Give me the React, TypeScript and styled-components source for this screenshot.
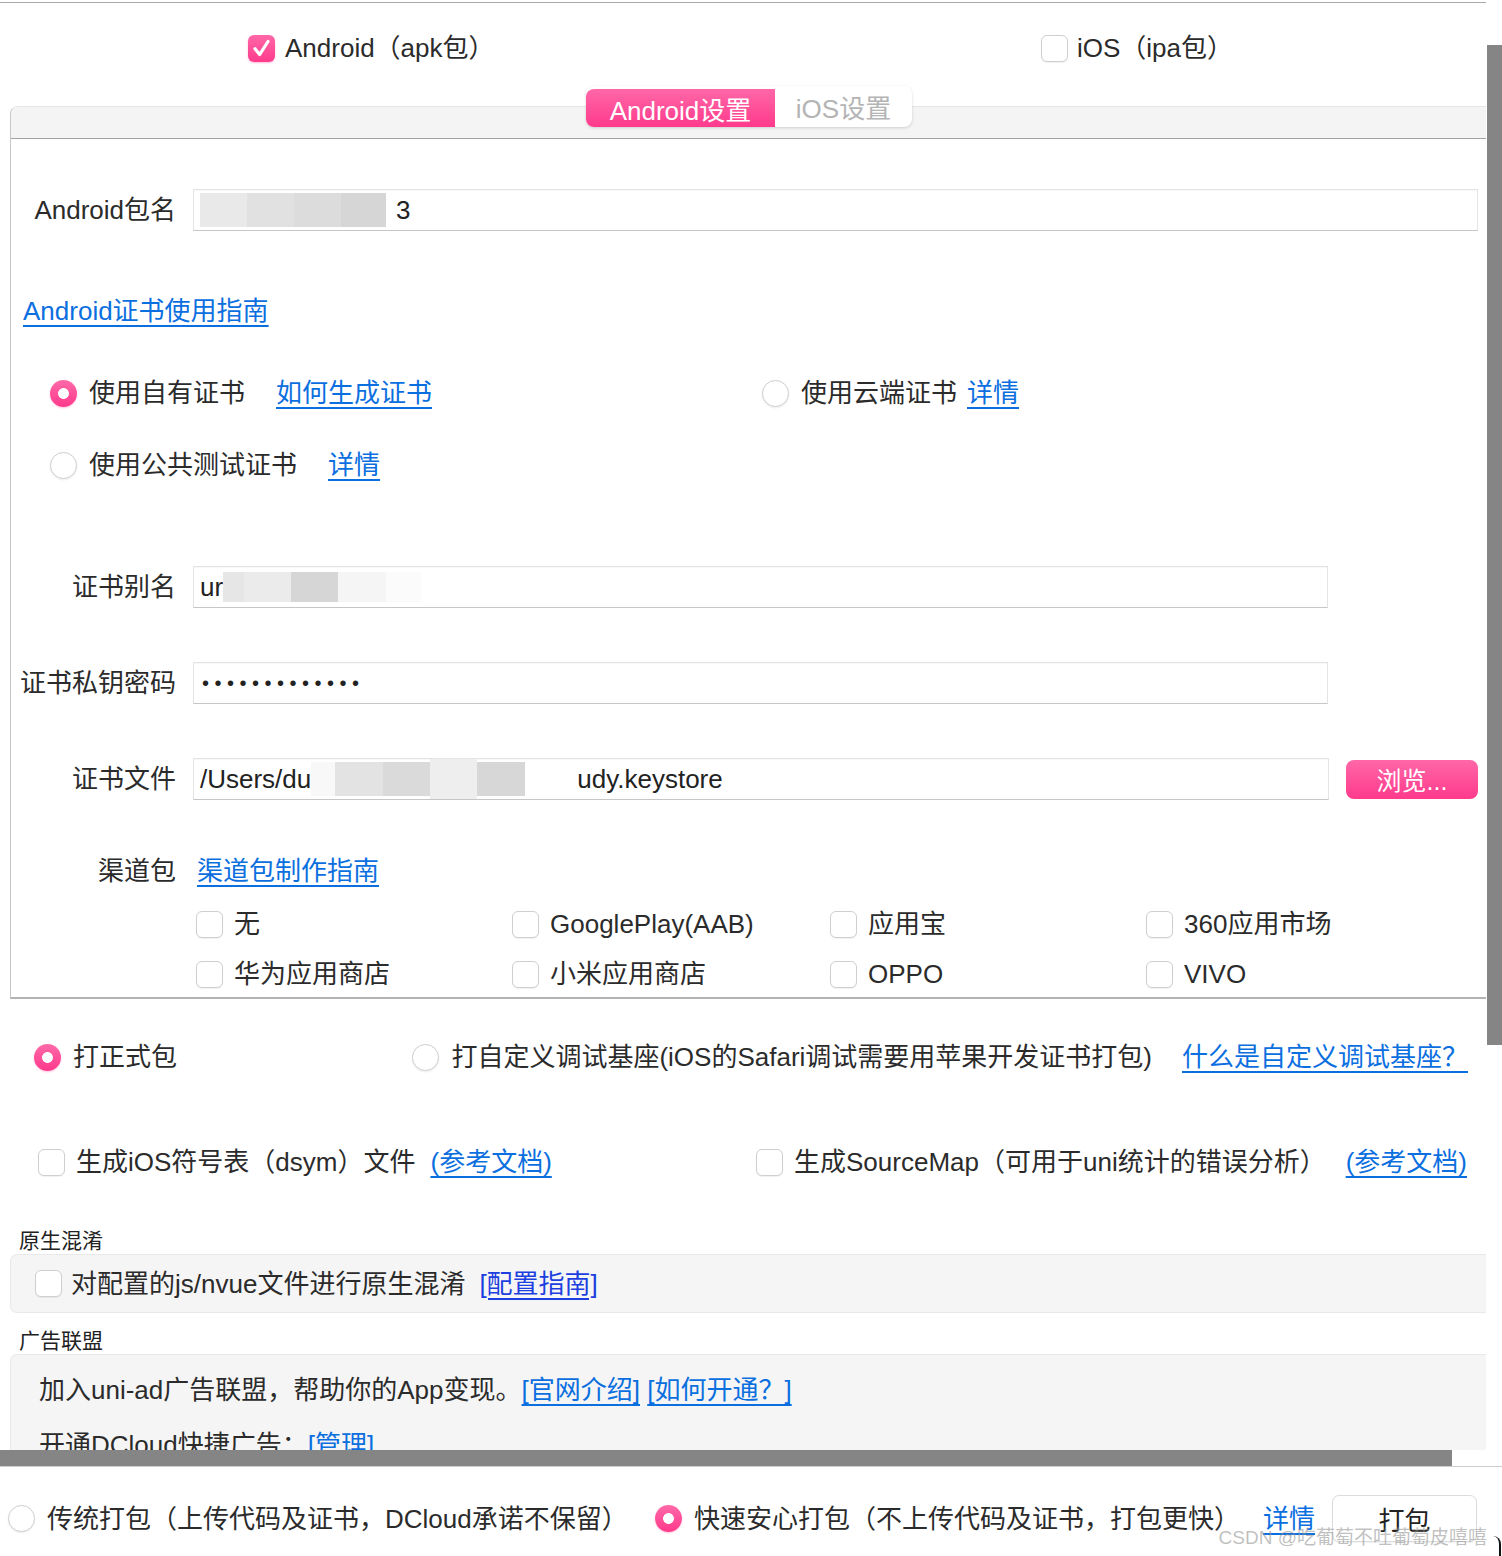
import React from 'react';
import styled, { createGlobalStyle, css } from 'styled-components';

const pinkFill = css`
  background: linear-gradient(180deg, #ff67a8 0%, #ff3a8c 100%);
`;

const GlobalStyle = createGlobalStyle`
  body {
    margin: 0;
    background: #fff;
    color: #2b2b2b;
    font-family: "Liberation Sans", "Noto Sans CJK SC", sans-serif;
  }
`;

const S = {
  screen: styled.div`
    position: relative;
    width: 1502px;
    height: 1556px;
    overflow: hidden;
    display: flex;
    flex-direction: column;
  `,
  upper: styled.div`
    display: flex;
    height: 1450px;
    flex: none;
  `,
  viewport: styled.div`
    width: 1486px;
    flex: none;
    overflow: hidden;
    margin-top: 2px;
    border-top: 1px solid #a9a9a9;
    display: flex;
    flex-direction: column;

    & > * {
      flex-shrink: 0;
    }
  `,
  vTrack: styled.div`
    flex: 1;
    display: flex;
    flex-direction: column;
  `,
  vThumb: styled.div`
    margin: 45px 0 0 1px;
    height: 1000px;
    background: #858585;
  `,
  hBar: styled.div`
    height: 16px;
    flex: none;
    display: flex;
  `,
  hThumb: styled.div`
    width: 1452px;
    background: #858585;
  `,
  bottom: styled.div`
    flex: 1;
    border-top: 1px solid #cdcdcd;
    display: flex;
    align-items: center;
    padding: 14px 25px 0 8px;
  `,
  bottomGroup: styled.div<{ $w?: number }>`
    display: flex;
    align-items: center;
    ${({ $w }) => ($w ? `width: ${$w}px; flex: none;` : '')}
  `,
  spacer: styled.div`
    flex: 1;
  `,
  packButton: styled.button`
    width: 145px;
    height: 47px;
    margin-left: 17px;
    background: #fff;
    border: 1px solid #dcdcdc;
    border-radius: 7px;
    box-shadow: 0 1px 1px rgba(0, 0, 0, 0.05);
    font-family: inherit;
    font-size: 26px;
    color: #222;
  `,
  watermark: styled.div`
    position: absolute;
    right: 15px;
    bottom: 7px;
    font-size: 19px;
    color: rgba(150, 150, 150, 0.6);
    white-space: nowrap;
    pointer-events: none;
  `,
  corner: styled.div`
    position: absolute;
    right: 1px;
    bottom: 0;
    width: 6px;
    height: 20px;
    border-right: 2px solid #111;
    border-top-right-radius: 12px;
  `,

  platformRow: styled.div`
    height: 83px;
    box-sizing: border-box;
    padding: 7px 0 0 248px;
    display: grid;
    grid-template-columns: 793px 1fr;
    align-items: center;
  `,
  tabs: styled.div`
    position: relative;
    z-index: 1;
    align-self: flex-start;
    margin-left: 586px;
    height: 41px;
    display: flex;
    background: #fff;
    border-radius: 8px;
    box-shadow: 0 1px 3px rgba(0, 0, 0, 0.16);
  `,
  tab: styled.div<{ $active?: boolean }>`
    display: flex;
    align-items: center;
    justify-content: center;
    font-size: 26px;
    ${({ $active }) =>
      $active
        ? css`
            width: 189px;
            margin-top: 3px;
            border-radius: 8px 0 0 8px;
            color: #fff;
            ${pinkFill}
          `
        : css`
            width: 137px;
            color: #b4b4b4;
          `}
  `,
  panel: styled.div`
    margin: -21px 0 0 10px;
    border-top: 1px solid #e6e6e6;
    border-left: 1px solid #c6c6c6;
    border-bottom: 2px solid #b3b3b3;
    border-top-left-radius: 8px;
    overflow: hidden;
  `,
  panelHead: styled.div`
    height: 31px;
    background: #f4f4f4;
    border-bottom: 1px solid #a3a3a3;
  `,
  panelBody: styled.div`
    display: flex;
    flex-direction: column;
    padding: 50px 8px 5px 0;
  `,
  field: styled.div<{ $mt: number; $mr?: number }>`
    display: flex;
    align-items: center;
    gap: 17px;
    margin-top: ${({ $mt }) => $mt}px;
    margin-right: ${({ $mr }) => $mr ?? 0}px;
  `,
  label: styled.div`
    width: 165px;
    flex: none;
    text-align: right;
    font-size: 26px;
    line-height: 36px;
    white-space: nowrap;
  `,
  input: styled.div`
    flex: 1;
    height: 42px;
    box-sizing: border-box;
    border: 1px solid #e4e4e4;
    border-bottom-color: #c6c6c6;
    background: #fff;
    box-shadow: inset 0 1px 1px rgba(0, 0, 0, 0.03);
    display: flex;
    align-items: center;
    padding-left: 6px;
    font-size: 26px;
    color: #222;
    white-space: nowrap;
    overflow: hidden;
  `,
  smudge: styled.span<{ $w: number; $c: string; $h?: number }>`
    flex: none;
    display: inline-block;
    width: ${({ $w }) => $w}px;
    height: ${({ $h }) => $h ?? 34}px;
    background: ${({ $c }) => $c};
  `,
  dots: styled.span`
    font-size: 20px;
    letter-spacing: 5.5px;
    padding-left: 2px;
  `,
  browse: styled.button`
    width: 132px;
    height: 39px;
    flex: none;
    border: none;
    border-radius: 8px;
    color: #fff;
    font-family: inherit;
    font-size: 25px;
    ${pinkFill}
  `,
  guide: styled.div`
    margin-top: 62px;
    padding-left: 12px;
    line-height: 36px;
  `,
  radioGrid: styled.div`
    margin-top: 42px;
    padding-left: 39px;
    display: grid;
    grid-template-columns: 712px 1fr;
    grid-auto-rows: 36px;
    row-gap: 36px;
  `,
  channelHead: styled.div`
    margin-top: 53px;
    display: flex;
    align-items: center;
    gap: 21px;
  `,
  channelGrid: styled.div`
    margin: 17px 0 0 185px;
    display: grid;
    grid-template-columns: 316px 318px 316px 1fr;
    grid-auto-rows: 36px;
    row-gap: 14px;
  `,
  spread: styled.div<{ $mt: number; $pl: number; $pr: number }>`
    margin-top: ${({ $mt }) => $mt}px;
    padding: 0 ${({ $pr }) => $pr}px 0 ${({ $pl }) => $pl}px;
    height: 36px;
    display: flex;
    align-items: center;
    justify-content: space-between;
  `,
  inline: styled.div<{ $gap: number }>`
    display: flex;
    align-items: center;
    gap: ${({ $gap }) => $gap}px;
  `,
  sectionTitle: styled.div<{ $mt: number }>`
    margin-top: ${({ $mt }) => $mt}px;
    padding-left: 19px;
    font-size: 21px;
    line-height: 26px;
    color: #222;
  `,
  grayBox: styled.div`
    margin-left: 10px;
    background: #f5f5f5;
    border: 1px solid #e8e8e8;
    border-right: none;
    border-radius: 7px 0 0 7px;
  `,
  obfBox: styled.div`
    height: 57px;
    display: flex;
    align-items: center;
    gap: 14px;
    padding-left: 24px;
  `,
  adBox: styled.div`
    display: flex;
    flex-direction: column;
    gap: 19px;
    padding: 17px 28px 30px;
    font-size: 26px;
    line-height: 36px;
    white-space: nowrap;
  `,
};

const Option = styled.label<{ $gap?: number }>`
  display: inline-flex;
  align-items: center;
  gap: ${({ $gap }) => $gap ?? 12}px;
  font-size: 26px;
  line-height: 36px;
  white-space: nowrap;
`;

const Link = styled.a<{ $deep?: boolean }>`
  color: ${({ $deep }) => ($deep ? '#1d3fe0' : '#0b6fe0')};
  text-decoration: underline;
  text-underline-offset: 5px;
  text-decoration-thickness: 1.5px;
  font-size: 26px;
  line-height: 36px;
  white-space: nowrap;
  cursor: pointer;
`;

const CheckBox = styled.span<{ $on?: boolean }>`
  flex: none;
  width: 27px;
  height: 27px;
  box-sizing: border-box;
  border-radius: 6px;
  display: inline-flex;
  align-items: center;
  justify-content: center;
  ${({ $on }) =>
    $on
      ? css`
          ${pinkFill}
          box-shadow: 0 1px 2px rgba(255, 60, 140, 0.35);
        `
      : css`
          background: #fff;
          border: 1px solid #cfcfcf;
          box-shadow: 0 1px 1px rgba(0, 0, 0, 0.06);
        `}
`;

const RadioDot = styled.span<{ $on?: boolean }>`
  flex: none;
  width: 27px;
  height: 27px;
  box-sizing: border-box;
  border-radius: 50%;
  ${({ $on }) =>
    $on
      ? css`
          background: radial-gradient(circle at center, #fff 0 5px, transparent 5.8px),
            linear-gradient(180deg, #ff6aa9 0%, #ff388b 100%);
          box-shadow: 0 1px 2px rgba(255, 60, 140, 0.3);
        `
      : css`
          background: #fff;
          border: 1px solid #cfcfcf;
          box-shadow: 0 1px 2px rgba(0, 0, 0, 0.08);
        `}
`;

const Check: React.FC<{ on?: boolean }> = ({ on }) => (
  <CheckBox $on={on}>
    {on && (
      <svg width="27" height="27" viewBox="0 0 27 27">
        <path
          d="M7 13.8 L11.6 19.6 L20 6.5"
          fill="none"
          stroke="#fff"
          strokeWidth="3.2"
          strokeLinecap="round"
          strokeLinejoin="round"
        />
      </svg>
    )}
  </CheckBox>
);

const CheckOption: React.FC<{ text: string; on?: boolean; gap?: number }> = ({ text, on, gap }) => (
  <Option $gap={gap ?? 11}>
    <Check on={on} />
    <span>{text}</span>
  </Option>
);

const RadioOption: React.FC<{ text: string; on?: boolean }> = ({ text, on }) => (
  <Option>
    <RadioDot $on={on} />
    <span>{text}</span>
  </Option>
);

const channels = ['无', 'GooglePlay(AAB)', '应用宝', '360应用市场', '华为应用商店', '小米应用商店', 'OPPO', 'VIVO'];

export default function App() {
  return (
    <S.screen>
      <GlobalStyle />
      <S.upper>
        <S.viewport>
          <S.platformRow>
            <CheckOption text="Android（apk包）" on gap={10} />
            <CheckOption text="iOS（ipa包）" gap={9} />
          </S.platformRow>

          <S.tabs>
            <S.tab $active>Android设置</S.tab>
            <S.tab>iOS设置</S.tab>
          </S.tabs>

          <S.panel>
            <S.panelHead />
            <S.panelBody>
              <S.field $mt={0}>
                <S.label>Android包名</S.label>
                <S.input>
                  <S.smudge $w={47} $c="#e9e9e9" />
                  <S.smudge $w={47} $c="#e1e1e1" />
                  <S.smudge $w={47} $c="#dcdcdc" />
                  <S.smudge $w={45} $c="#d6d6d6" />
                  <span style={{ marginLeft: 10 }}>3</span>
                </S.input>
              </S.field>

              <S.guide>
                <Link>Android证书使用指南</Link>
              </S.guide>

              <S.radioGrid>
                <S.inline $gap={31}>
                  <RadioOption text="使用自有证书" on />
                  <Link>如何生成证书</Link>
                </S.inline>
                <S.inline $gap={10}>
                  <RadioOption text="使用云端证书" />
                  <Link>详情</Link>
                </S.inline>
                <S.inline $gap={31}>
                  <RadioOption text="使用公共测试证书" />
                  <Link>详情</Link>
                </S.inline>
              </S.radioGrid>

              <S.field $mt={83} $mr={150}>
                <S.label>证书别名</S.label>
                <S.input>
                  <span>ur</span>
                  <S.smudge $w={21} $c="#e6e6e6" $h={30} />
                  <S.smudge $w={47} $c="#ebebeb" $h={30} />
                  <S.smudge $w={47} $c="#d6d6d6" $h={30} />
                  <S.smudge $w={48} $c="#f5f5f5" $h={30} />
                  <S.smudge $w={35} $c="#fbfbfb" $h={30} />
                </S.input>
              </S.field>

              <S.field $mt={54} $mr={150}>
                <S.label>证书私钥密码</S.label>
                <S.input>
                  <S.dots>•••••••••••••</S.dots>
                </S.input>
              </S.field>

              <S.field $mt={54}>
                <S.label>证书文件</S.label>
                <S.input>
                  <span>/Users/du</span>
                  <S.smudge $w={24} $c="#f8f8f8" />
                  <S.smudge $w={48} $c="#e3e3e3" />
                  <S.smudge $w={47} $c="#dadada" />
                  <S.smudge $w={47} $c="#eeeeee" $h={40} />
                  <S.smudge $w={48} $c="#d7d7d7" />
                  <S.smudge $w={52} $c="#fff" />
                  <span>udy.keystore</span>
                </S.input>
                <S.browse>浏览...</S.browse>
              </S.field>

              <S.channelHead>
                <S.label>渠道包</S.label>
                <Link>渠道包制作指南</Link>
              </S.channelHead>

              <S.channelGrid>
                {channels.map(c => (
                  <CheckOption key={c} text={c} />
                ))}
              </S.channelGrid>
            </S.panelBody>
          </S.panel>

          <S.spread $mt={40} $pl={34} $pr={18}>
            <RadioOption text="打正式包" on />
            <S.inline $gap={30}>
              <RadioOption text="打自定义调试基座(iOS的Safari调试需要用苹果开发证书打包)" />
              <Link>什么是自定义调试基座？</Link>
            </S.inline>
          </S.spread>

          <S.spread $mt={69} $pl={38} $pr={19}>
            <S.inline $gap={15}>
              <CheckOption text="生成iOS符号表（dsym）文件" />
              <Link>(参考文档)</Link>
            </S.inline>
            <S.inline $gap={20}>
              <CheckOption text="生成SourceMap（可用于uni统计的错误分析）" />
              <Link>(参考文档)</Link>
            </S.inline>
          </S.spread>

          <S.sectionTitle $mt={48}>原生混淆</S.sectionTitle>
          <S.grayBox>
            <S.obfBox>
              <CheckOption text="对配置的js/nvue文件进行原生混淆" gap={9} />
              <Link $deep>[配置指南]</Link>
            </S.obfBox>
          </S.grayBox>

          <S.sectionTitle $mt={15}>广告联盟</S.sectionTitle>
          <S.grayBox>
            <S.adBox>
              <div>
                加入uni-ad广告联盟，帮助你的App变现。<Link>[官网介绍]</Link> <Link>[如何开通？]</Link>
              </div>
              <div>
                开通DCloud快捷广告：<Link>[管理]</Link>
              </div>
            </S.adBox>
          </S.grayBox>
        </S.viewport>
        <S.vTrack>
          <S.vThumb />
        </S.vTrack>
      </S.upper>

      <S.hBar>
        <S.hThumb />
      </S.hBar>

      <S.bottom>
        <S.bottomGroup $w={647}>
          <RadioOption text="传统打包（上传代码及证书，DCloud承诺不保留）" />
        </S.bottomGroup>
        <S.bottomGroup>
          <RadioOption text="快速安心打包（不上传代码及证书，打包更快）" on />
        </S.bottomGroup>
        <S.spacer />
        <Link>详情</Link>
        <S.packButton>打包</S.packButton>
      </S.bottom>

      <S.watermark>CSDN @吃葡萄不吐葡萄皮嘻嘻</S.watermark>
      <S.corner />
    </S.screen>
  );
}
